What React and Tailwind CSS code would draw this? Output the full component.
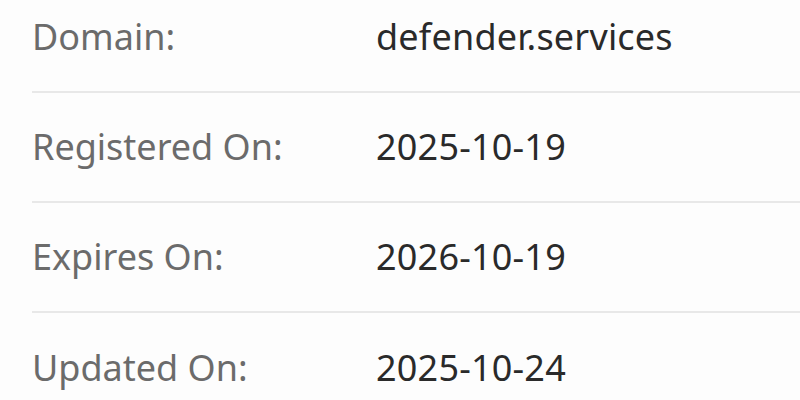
import React from "react";

const rows = [
  { label: "Domain:", value: "defender.services" },
  { label: "Registered On:", value: "2025-10-19" },
  { label: "Expires On:", value: "2026-10-19" },
  { label: "Updated On:", value: "2025-10-24" },
];

const App = () => {
  return (
    <div className="w-[800px] h-[400px] overflow-hidden bg-[#fdfdfd] font-['Noto_Sans',sans-serif]">
      <div className="mt-[-17px] pl-8">
        {rows.map((row, i) => (
          <div
            key={row.label}
            className={`flex items-center h-[110px] ${i < rows.length - 1 ? "border-b-2 border-[#e8e8e8]" : ""}`}
          >
            <div className="w-[344px] text-[36px] text-[#6b6b6b]">{row.label}</div>
            <div className="text-[36px] tracking-[0.2px] text-[#2a2a2a]">{row.value}</div>
          </div>
        ))}
      </div>
    </div>
  );
};

export default App;
